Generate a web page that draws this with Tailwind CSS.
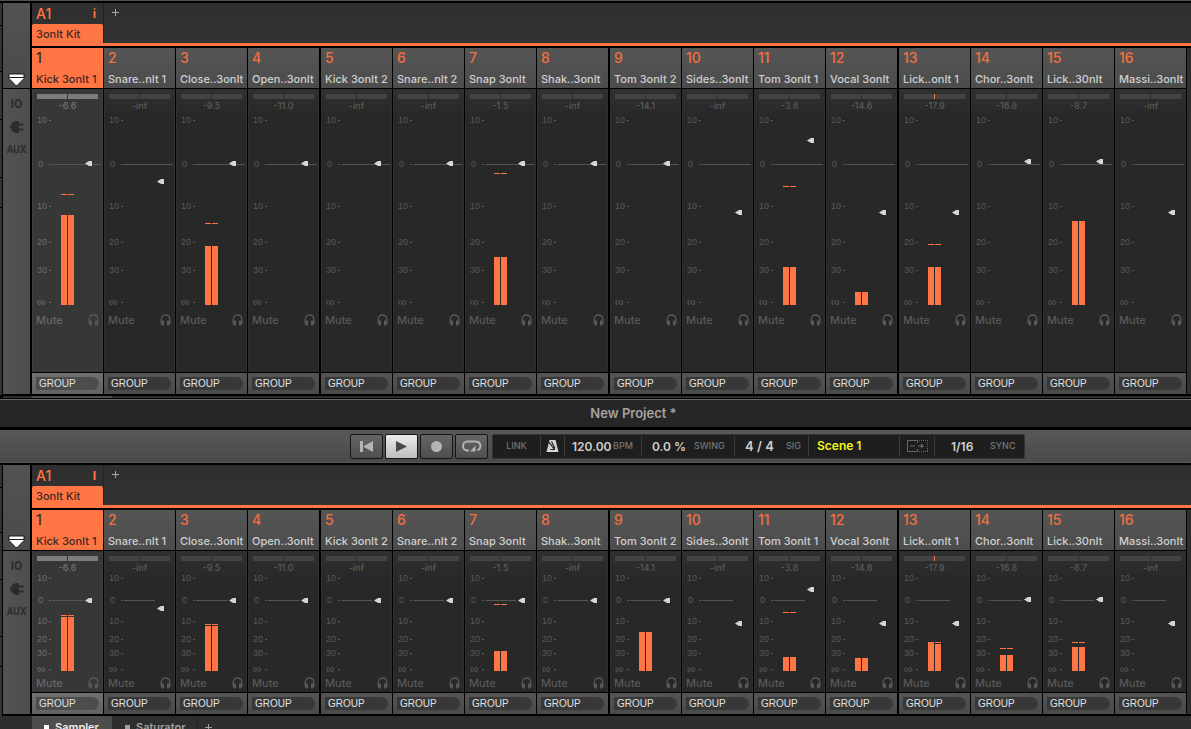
<!DOCTYPE html>
<html lang="en">
<head>
<meta charset="utf-8">
<meta name="viewport" content="width=device-width, initial-scale=1">
<title>New Project *</title>
<script src="https://cdn.jsdelivr.net/npm/@tailwindcss/browser@4"></script>
</head>
<body class="flex h-screen flex-col overflow-hidden bg-black font-[Inter,'Liberation_Sans',sans-serif] text-[#cfcfcf] select-none">

<div class="h-px shrink-0 bg-[#505050]"></div>
<section id="mixer-tall" aria-label="Mixer" class="flex h-[395px] shrink-0 pt-[2px]"></section>

<div class="flex h-[2px] shrink-0 pl-[3px]" aria-hidden="true">
  <div class="w-[29px] bg-[#2c2c2c]"></div><div class="w-20 bg-[#4d4d4d]"></div><div class="flex-1 bg-[#2e2e2e]"></div>
</div>

<header class="mt-px flex h-7 shrink-0 items-center justify-center border-t border-[#666] bg-[#262626] pb-[2px] pl-19">
  <h1 class="text-[13px] leading-4 font-semibold text-[#a3a3a3]">New Project *</h1>
</header>

<div class="mt-[3px] flex h-[33px] shrink-0 items-center justify-center gap-1 border-b border-[#5a5a5a] bg-linear-to-b from-[#585858] to-[#4a4a4a] pl-[184px]">
  <div class="flex gap-[2px]">
    <button aria-label="Restart" class="flex h-[25px] w-[33px] items-center justify-center rounded-xs border border-[#161616] bg-linear-to-b from-[#666] to-[#4e4e4e]">
      <svg width="15" height="13" viewBox="0 0 15 13" fill="#b4b4b4"><path d="M1 1h3v11H1zM14 1v11L4 6.500z"/></svg></button>
    <button aria-label="Play" class="flex h-[25px] w-[33px] items-center justify-center rounded-xs border border-[#161616] bg-linear-to-b from-[#ececec] to-[#bdbdbd]">
      <svg width="13" height="13" viewBox="0 0 13 13" fill="#484848"><path d="M1 1l11 5.500L1 12z"/></svg></button>
    <button aria-label="Record" class="flex h-[25px] w-[33px] items-center justify-center rounded-xs border border-[#161616] bg-linear-to-b from-[#666] to-[#4e4e4e]">
      <svg width="13" height="13" viewBox="0 0 13 13" fill="#b4b4b4"><circle cx="6.500" cy="6.500" r="5.500"/></svg></button>
    <button aria-label="Loop" class="flex h-[25px] w-[33px] items-center justify-center rounded-xs border border-[#161616] bg-linear-to-b from-[#666] to-[#4e4e4e]">
      <svg width="20" height="14" viewBox="0 0 20 14"><path d="M7 11.500H5.500a4.500 4.500 0 0 1 0-9h9a4.500 4.500 0 0 1 1 8.700" fill="none" stroke="#b4b4b4" stroke-width="2"/><path d="M13.500 6.500v6H8z" fill="#b4b4b4"/></svg></button>
  </div>
  <div class="flex h-[25px] items-center rounded-xs border border-[#333] bg-[#1e1e1e] text-[9px] leading-3 font-medium text-[#757575]">
    <button class="h-5 w-[47px]">LINK</button>
    <button aria-label="Metronome" class="flex h-5 w-[25px] items-center justify-center border-x border-[#3c3c3c]">
      <svg width="13" height="12" viewBox="0 0 13 12"><path d="M3.500 0h6L12.500 12H.500z" fill="#d4d4d4"/><path d="M2 1l6.200 8M5.500 1.500l3.500 7M4.500 9.500h4.500" stroke="#1e1e1e" stroke-width="1.200" fill="none"/></svg></button>
    <label class="flex h-5 w-[77px] items-center border-r border-[#3c3c3c] pl-[7px]"><input value="120.00" class="w-[41px] text-[12px] font-semibold text-[#cfcfcf] outline-none"><span>BPM</span></label>
    <label class="flex h-5 w-[93px] items-center border-r border-[#3c3c3c] pl-[10px]"><input value="0.0 %" class="w-[42px] text-[12px] font-semibold text-[#cfcfcf] outline-none"><span>SWING</span></label>
    <label class="flex h-5 w-[74px] items-center border-r border-[#3c3c3c] pl-[10px]"><input value="4 / 4" class="w-[41px] text-[13px] font-semibold text-[#cfcfcf] outline-none"><span>SIG</span></label>
    <button class="h-5 w-[91px] border-r border-[#3c3c3c] pl-2 text-left text-[12px] font-semibold text-[#f4f41e]">Scene 1</button>
    <button aria-label="Follow" class="flex h-5 w-[35px] items-center justify-center border-r border-[#3c3c3c]">
      <svg width="21" height="12" viewBox="0 0 21 12" fill="none" stroke="#686868"><path d="M10.500 3V.500h-10v11h10V9M3 6h5"/><path d="M11 6h3" /><path d="M14 3.500L17 6l-3 2.500z" fill="#686868" stroke="none"/><path d="M12 .500h9M12 11.500h9M20.500 2v9" stroke-dasharray="1 1"/></svg></button>
    <label class="flex h-5 w-[89px] items-center pl-4"><input value="1/16" class="w-[39px] text-[12px] font-semibold text-[#cfcfcf] outline-none"><span>SYNC</span></label>
  </div>
</div>

<section id="mixer-short" aria-label="Mixer, compact" class="mt-[2px] flex h-[251px] shrink-0"></section>

<nav aria-label="Plug-ins" class="flex h-[22px] shrink-0 overflow-hidden bg-[#2e2e2e] pl-8 text-[11px] font-semibold">
  <button class="flex w-20 items-center gap-[6px] bg-[#4d4d4d] pl-3 text-[#f0f0f0]"><i class="size-[5px] bg-white"></i>Sampler</button>
  <button class="flex w-[86px] items-center gap-[6px] border-r border-[#222] pl-[13px] text-[#a0a0a0]"><i class="size-[5px] bg-[#a0a0a0]"></i>Saturator</button>
  <button aria-label="Add plug-in" class="flex w-5 items-center justify-center text-[#a0a0a0]"><svg width="7" height="7" viewBox="0 0 7 7" stroke="currentColor"><path d="M3.500 0v7M0 3.500h7"/></svg></button>
</nav>

<script>
const names = ['Kick 3onIt 1','Snare..nIt 1','Close..3onIt','Open..3onIt','Kick 3onIt 2','Snare..nIt 2','Snap 3onIt','Shak..3onIt',
  'Tom 3onIt 2','Sides..3onIt','Tom 3onIt 1','Vocal 3onIt','Lick..onIt 1','Chor..3onIt','Lick..30nIt','Massi..3onIt'];
const peaks = ['-6.6','-inf','-9.5','-11.0','-inf','-inf','-1.5','-inf','-14.1','-inf','-3.8','-14.6','-17.9','-16.8','-8.7','-inf'];
const marks = ['10','0','10','20','30','∞'];

// Offsets are measured from the top of the fader area; meters hold [left top, right top, peak top].
const tall = {
  ticks: [8, 52, 94, 130, 158, 190], floor: 193, area: 'h-[200px]', zero: 'w-[49px]',
  knobs: [51,69,51,51,51,51,51,51,51,100,28,100,100,49,49,100],
  meters: {0:[103,103,82], 2:[134,134,111], 6:[145,145,61], 10:[155,155,74], 11:[180,180], 12:[155,155,132], 14:[109,109]},
  rail: [22,45,47,57,29,187], info: 'i'
};
const compact = {
  ticks: [4, 26, 47, 65, 79, 95], floor: 97, area: 'h-[101px]', zero: 'w-[31px]',
  knobs: [26,34,26,26,26,26,26,26,26,49,15,49,49,25,25,49],
  meters: {0:[43,43,41], 2:[52,52,50], 6:[77,77,30], 8:[58,58], 10:[83,83,38], 11:[84,84], 12:[69,70,68], 13:[81,81,74], 14:[73,73,68]},
  rail: [22,45,47,57,29,50], info: 'I'
};

const bar = (x, top, floor, peak) =>
  `<i class="absolute w-[6px] bg-[#ff7544] ${x}" style="top:${top}px;height:${floor - top}px"></i>` +
  (peak ? `<i class="absolute h-px w-[6px] bg-[#ff7544] ${x}" style="top:${peak}px"></i>` : '');

const tickText = { '10': 'pl-px text-[9px]', '20': 'pl-px text-[9px]', '30': 'pl-px text-[9px]', '0': 'pl-[2px] text-[9px]', '∞': 'pl-px text-[12px]' };

function strip(i, m) {
  const on = i === 0, lv = m.meters[i];
  const edge = i % 4 === 3 && i < 15 ? 'mr-[2px]' : 'mr-px';
  const pan = on ? 'bg-[#7c7c7c]' : 'bg-[#434343]';
  return `<article class="flex w-[71px] shrink-0 flex-col ${edge}">
    <h2 class="h-10 overflow-hidden pl-1 font-medium whitespace-nowrap ${on ? 'bg-[#ff7544] text-[#3a2a24]' : 'bg-linear-to-b from-[#555] to-[#4c4c4c]'}">
      <span class="block pt-px text-[14px] leading-[18px] ${on ? '' : 'text-[#f2703f]'}">${i + 1}</span>
      <span class="block pt-1 text-[11px] leading-4">${names[i]}</span></h2>
    <div class="mt-px flex flex-1 flex-col border-x pt-[5px] ${on ? 'border-[#404040] bg-[#373737]' : 'border-[#2f2f2f] bg-linear-to-b from-[#303030] to-[#282828] to-[28px]'}">
      <div class="ml-1 flex h-[5px] w-[61px]">
        <i class="w-[30px] ${pan}"></i><i class="w-px ${i === 12 ? 'bg-[#ff7544]' : ''}"></i><i class="w-[30px] ${pan}"></i></div>
      <output class="block h-[13px] text-center text-[9px] leading-[14px] font-medium ${on ? 'text-[#727272]' : 'text-[#5c5c5c]'}">${peaks[i]}</output>
      <div class="relative -ml-px ${m.area} ${on ? 'text-[#6c6c6c]' : 'text-[#5a5a5a]'}">
        ${marks.map((t, k) => `<span class="absolute left-1 flex h-[10px] w-[15px] items-center justify-between leading-[10px] font-['Liberation_Sans',sans-serif] ${tickText[t]}" style="top:${m.ticks[k] - 5}px">${t}<i class="h-px w-[2px] bg-current"></i></span>`).join('')}
        <i class="absolute left-5 h-px bg-[#555] ${m.zero}" style="top:${m.ticks[1]}px"></i>
        ${lv ? bar('left-[29px]', lv[0], m.floor, lv[2]) + bar('left-[36px]', lv[1], m.floor, lv[2]) : ''}
        <svg class="absolute left-[53px]" style="top:${m.knobs[i] - 2}px" width="8" height="5" viewBox="0 0 8 5" fill="#d6d6d6"><path d="M0 2.500L4 0H7v5H4z"/></svg>
        <input type="range" aria-label="${names[i]} volume" class="absolute top-0 right-2 h-full w-4 opacity-0 [writing-mode:vertical-lr]">
      </div>
      <div class="flex h-4 items-center justify-between pr-[3px] pl-[3px] text-[#585858]">
        <button class="text-[11px] leading-4 font-medium ${on ? 'text-[#656565]' : ''}">Mute</button>
        <button aria-label="Cue ${names[i]}"><svg class="block" width="11" height="12" viewBox="0 0 11 12"><path d="M1.200 8V5.500C1.200 2.500 3 1 5.500 1s4.300 1.500 4.300 4.500V8" fill="none" stroke="currentColor" stroke-width="1.300"/><path d="M1.500 6.500H4v5H2.200L.600 9.500V7zM9.500 6.500H7v5h1.800l1.600-2V7z" fill="currentColor"/></svg></button>
      </div>
    </div>
    <div class="mt-px flex h-[21px] items-center pl-1 ${on ? 'bg-linear-to-b from-[#707070] to-[#626262]' : 'bg-linear-to-b from-[#545454] to-[#4a4a4a]'}">
      <select aria-label="${names[i]} output" class="h-[13px] w-[63px] appearance-none rounded-l-xs rounded-r-full pl-[3px] font-['Liberation_Sans',sans-serif] text-[10px] leading-[13px] text-[#e0e0e0] ${on ? 'bg-[#4c4c4c]' : 'bg-[#383838]'}"><option>GROUP</option></select></div>
  </article>`;
}

function mixer(m) {
  return `<div class="flex w-[2px] flex-col gap-px bg-black" aria-hidden="true">${m.rail.map(h => `<i class="w-full bg-[#333]" style="height:${h}px"></i>`).join('')}</div>
  <aside class="mr-[2px] mb-[2px] ml-px flex w-[27px] flex-col">
    <button aria-label="View" class="flex h-[85px] items-end justify-center bg-linear-to-b from-[#525252] to-[#4b4b4b] pb-px">
      <svg width="17" height="14" viewBox="0 0 17 14"><path d="M1 1h15v4.500L9.200 12.500H7.800L1 5.500z" fill="#fff" stroke="#1b1b1b"/><path d="M1 4.500h15" stroke="#1b1b1b"/></svg></button>
    <div class="mt-px flex flex-1 flex-col items-center bg-linear-to-r from-[#535353] to-[#4d4d4d] pt-[6px] font-[Roboto,'Liberation_Sans',sans-serif] font-bold text-[#2c2c2c]">
      <button class="h-[18px] text-[12px] leading-[18px]">IO</button>
      <button aria-label="Plug-ins" class="flex h-7 items-center"><svg width="14" height="12" viewBox="0 0 14 12" fill="currentColor"><path d="M9 0v12H6.500C3.500 12 1.500 9.700 1 7.500L0 7V5l1-.500C1.500 2.300 3.500 0 6.500 0zM9 2.500h4.500v2H9zM9 7.500h4.500v2H9z"/></svg></button>
      <button class="h-[18px] text-[10px] leading-[18px]">AUX</button>
    </div>
  </aside>
  <div class="flex min-w-0 flex-1 flex-col">
    <div class="flex h-[43px] shrink-0 bg-linear-to-b from-[#2f2f2f] to-[#333]">
      <div class="flex w-[72px] flex-col border-r border-[#222]">
        <div class="flex h-[21px] items-center justify-between pr-[7px] pl-1 text-[14px] font-medium text-[#ff7544]"><span>A1</span><span class="text-[12px] font-bold">${m.info}</span></div>
        <button class="flex-1 rounded-t-xs bg-[#ff7544] pb-[2px] pl-1 text-left text-[11px] font-medium text-[#3a2a24]">3onIt Kit</button>
      </div>
      <div class="-ml-px flex-1 border-b-3 border-[#ff7544] pt-[6px] pl-[9px]"><button aria-label="Add group" class="block text-[#a8a8a8]"><svg class="block" width="7" height="7" viewBox="0 0 7 7" stroke="currentColor"><path d="M3.500 0v7M0 3.500h7"/></svg></button></div>
    </div>
    <div class="mt-[2px] mb-[2px] flex min-h-0 flex-1 overflow-hidden">${names.map((_, i) => strip(i, m)).join('')}<div class="flex-1 bg-[#2f2f2f]"></div></div>
  </div>`;
}
document.getElementById('mixer-tall').innerHTML = mixer(tall);
document.getElementById('mixer-short').innerHTML = mixer(compact);
</script>
</body>
</html>
